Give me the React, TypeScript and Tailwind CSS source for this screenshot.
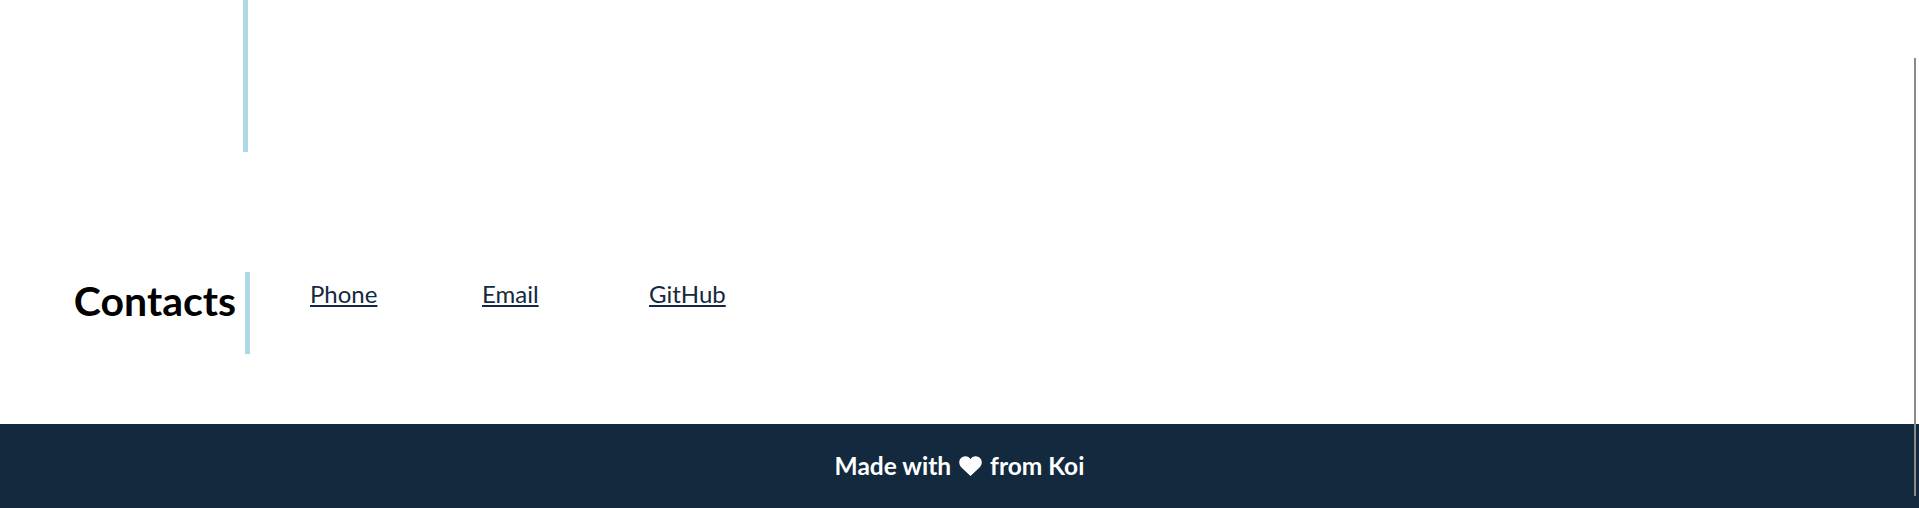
export default function App() {
  const links = ["Phone", "Email", "GitHub"];
  return (
    <div className="relative h-[508px] overflow-hidden bg-white font-['Lato','Noto_Sans',sans-serif]">
      <div className="ml-[243px] h-[152px] w-[5px] bg-[#add8e6]" />
      <section className="mt-[120px] flex h-[82px]">
        <h2 className="w-[245px] pt-[4px] pr-[9px] text-right text-[41px] leading-[50px] font-bold text-black">Contacts</h2>
        <div className="grid grid-cols-[172px_167px_auto] border-l-[5px] border-[#add8e6] pt-[8px] pl-[60px]">
          {links.map((link) => (
            <a key={link} href="#" className="h-fit w-fit text-[24px] leading-[28px] text-[#14293f] underline">
              {link}
            </a>
          ))}
        </div>
      </section>
      <footer className="mt-[70px] flex h-[84px] items-center justify-center bg-[#132a3e] text-[24.500px] font-bold text-white">
        Made with
        <svg viewBox="0 0 24 21" className="mr-[8px] ml-[8px] h-[20px] w-[23px] fill-white">
          <path d="M12 21 2.500 12C-1 8.500 -0.500 3 3.500 1 7 -0.700 10.500 0.500 12 3.500 13.500 0.500 17 -0.700 20.500 1 24.500 3 25 8.500 21.500 12Z" />
        </svg>
        from Koi
      </footer>
      <div className="absolute top-[58px] left-[1914px] h-[438px] w-[2px] bg-[#8a8a8a]" />
    </div>
  );
}
